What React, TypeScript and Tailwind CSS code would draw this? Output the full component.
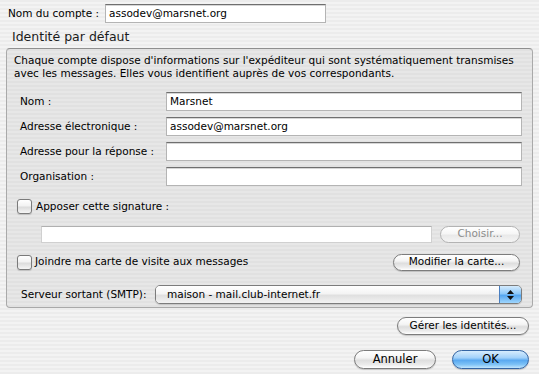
import React from "react";

const font = "font-['DejaVu_Sans','Liberation_Sans',sans-serif]";

const field =
  "bg-white border border-[#b4b4b4] border-t-[#6f6f6f] shadow-[inset_0_1px_0_#d6d6d6] px-[3px] text-[10.5px] leading-none flex items-center text-black";

const aquaBtn =
  "flex items-center justify-center rounded-full border border-[#7c7c7c] bg-[linear-gradient(180deg,#ffffff_0%,#f4f4f4_40%,#dedede_55%,#ebebeb_80%,#ffffff_100%)] shadow-[0_1px_1px_rgba(0,0,0,0.18)] text-[10.5px] text-black";

const Checkbox = () => (
  <div className="w-[15px] h-[15px] rounded-[3px] border border-[#7a7a7a] bg-[linear-gradient(180deg,#ffffff_0%,#f2f2f2_45%,#dcdcdc_55%,#f5f5f5_100%)] shadow-[0_1px_1px_rgba(0,0,0,0.15)]" />
);

const rows = [
  { label: "Nom :", value: "Marsnet" },
  { label: "Adresse électronique :", value: "assodev@marsnet.org" },
  { label: "Adresse pour la réponse :", value: "" },
  { label: "Organisation :", value: "" },
];

export default function App() {
  return (
    <div
      className={`w-[539px] h-[374px] overflow-hidden ${font} text-black bg-[repeating-linear-gradient(180deg,#ececec_0px,#ececec_2px,#f3f3f3_2px,#f3f3f3_4px)]`}
    >
      {/* account name */}
      <div className="flex items-center pt-[4px] pl-[8px]">
        <span className="w-[97px] text-[10.5px]">Nom du compte :</span>
        <div className={`${field} w-[221px] h-[19px]`}>assodev@marsnet.org</div>
      </div>

      <div className="mt-[6px] pl-[12px] text-[12.5px] leading-[16px] text-[#1b1b1b]">
        Identité par défaut
      </div>

      {/* group box */}
      <div className="mt-[3px] mx-[6px] h-[260px] rounded-[4px] border border-[#a9a9a9] border-t-[#8f8f8f] bg-[repeating-linear-gradient(180deg,#e1e1e1_0px,#e1e1e1_2px,#e7e7e7_2px,#e7e7e7_4px)]">
        <p className="ml-[7px] mt-[5px] text-[10.5px] leading-[13px]">
          Chaque compte dispose d'informations sur l'expéditeur qui sont systématiquement transmises
          <br />
          avec les messages. Elles vous identifient auprès de vos correspondants.
        </p>

        <div className="mt-[12px] flex flex-col gap-[6px]">
          {rows.map((r) => (
            <div key={r.label} className="flex items-center h-[19px]">
              <span className="ml-[13px] w-[146px] text-[10.5px]">{r.label}</span>
              <div className={`${field} w-[356px] h-[19px]`}>{r.value}</div>
            </div>
          ))}
        </div>

        <div className="mt-[13px] flex items-center h-[15px]">
          <div className="ml-[10px]">
            <Checkbox />
          </div>
          <span className="ml-[4px] text-[10.5px]">Apposer cette signature :</span>
        </div>

        <div className="mt-[11px] flex items-center h-[18px]">
          <div className={`${field} ml-[34px] w-[391px] h-[17px] border-[#d0d0d0] border-t-[#b0b0b0] shadow-none`} />
          <div className="ml-[8px] w-[80px] h-[17px] flex items-center justify-center rounded-full border border-[#b3b3b3] bg-[linear-gradient(180deg,#ffffff_0%,#f6f6f6_45%,#e9e9e9_55%,#f4f4f4_100%)] text-[10.5px] text-[#8c8c8c]">
            Choisir...
          </div>
        </div>

        <div className="mt-[10px] flex items-center h-[18px]">
          <div className="ml-[10px]">
            <Checkbox />
          </div>
          <span className="ml-[3px] text-[10.5px]">Joindre ma carte de visite aux messages</span>
          <div className={`${aquaBtn} ml-auto mr-[12px] w-[127px] h-[17px]`}>Modifier la carte...</div>
        </div>

        <div className="mt-[14px] flex items-center h-[19px]">
          <span className="ml-[14px] w-[134px] text-[10.5px]">Serveur sortant (SMTP):</span>
          <div className="flex w-[367px] h-[19px] rounded-[5px] border border-[#7c7c7c] overflow-hidden shadow-[0_1px_1px_rgba(0,0,0,0.15)]">
            <div className="flex-1 flex items-center pl-[11px] text-[10.5px] bg-[linear-gradient(180deg,#ffffff_0%,#f4f4f4_45%,#e0e0e0_55%,#f2f2f2_100%)]">
              maison - mail.club-internet.fr
            </div>
            <div className="w-[22px] flex flex-col items-center justify-center gap-[2px] border-l border-[#4a7fc0] bg-[linear-gradient(180deg,#d4ebfd_0%,#8ec8f8_45%,#56a6ef_55%,#9fd6fd_100%)]">
              <svg width="7" height="4" viewBox="0 0 7 4">
                <path d="M3.5 0L7 4H0z" fill="#111" />
              </svg>
              <svg width="7" height="4" viewBox="0 0 7 4">
                <path d="M0 0h7L3.5 4z" fill="#111" />
              </svg>
            </div>
          </div>
        </div>
      </div>

      <div className="mt-[9px] flex justify-end pr-[10px]">
        <div className={`${aquaBtn} w-[132px] h-[18px]`}>Gérer les identités...</div>
      </div>

      <div className="mt-[15px] flex justify-end gap-[16px] pr-[10px]">
        <div className={`${aquaBtn} w-[82px] h-[19px] text-[11.5px]`}>Annuler</div>
        <div className="w-[77px] h-[19px] flex items-center justify-center rounded-full border border-[#3465a4] bg-[linear-gradient(180deg,#d6ecfd_0%,#a2d1fa_40%,#5aa9f0_55%,#7fc3f7_80%,#c2e6fe_100%)] shadow-[0_1px_1px_rgba(0,0,0,0.2)] text-[11.5px] text-black">
          OK
        </div>
      </div>
    </div>
  );
}
